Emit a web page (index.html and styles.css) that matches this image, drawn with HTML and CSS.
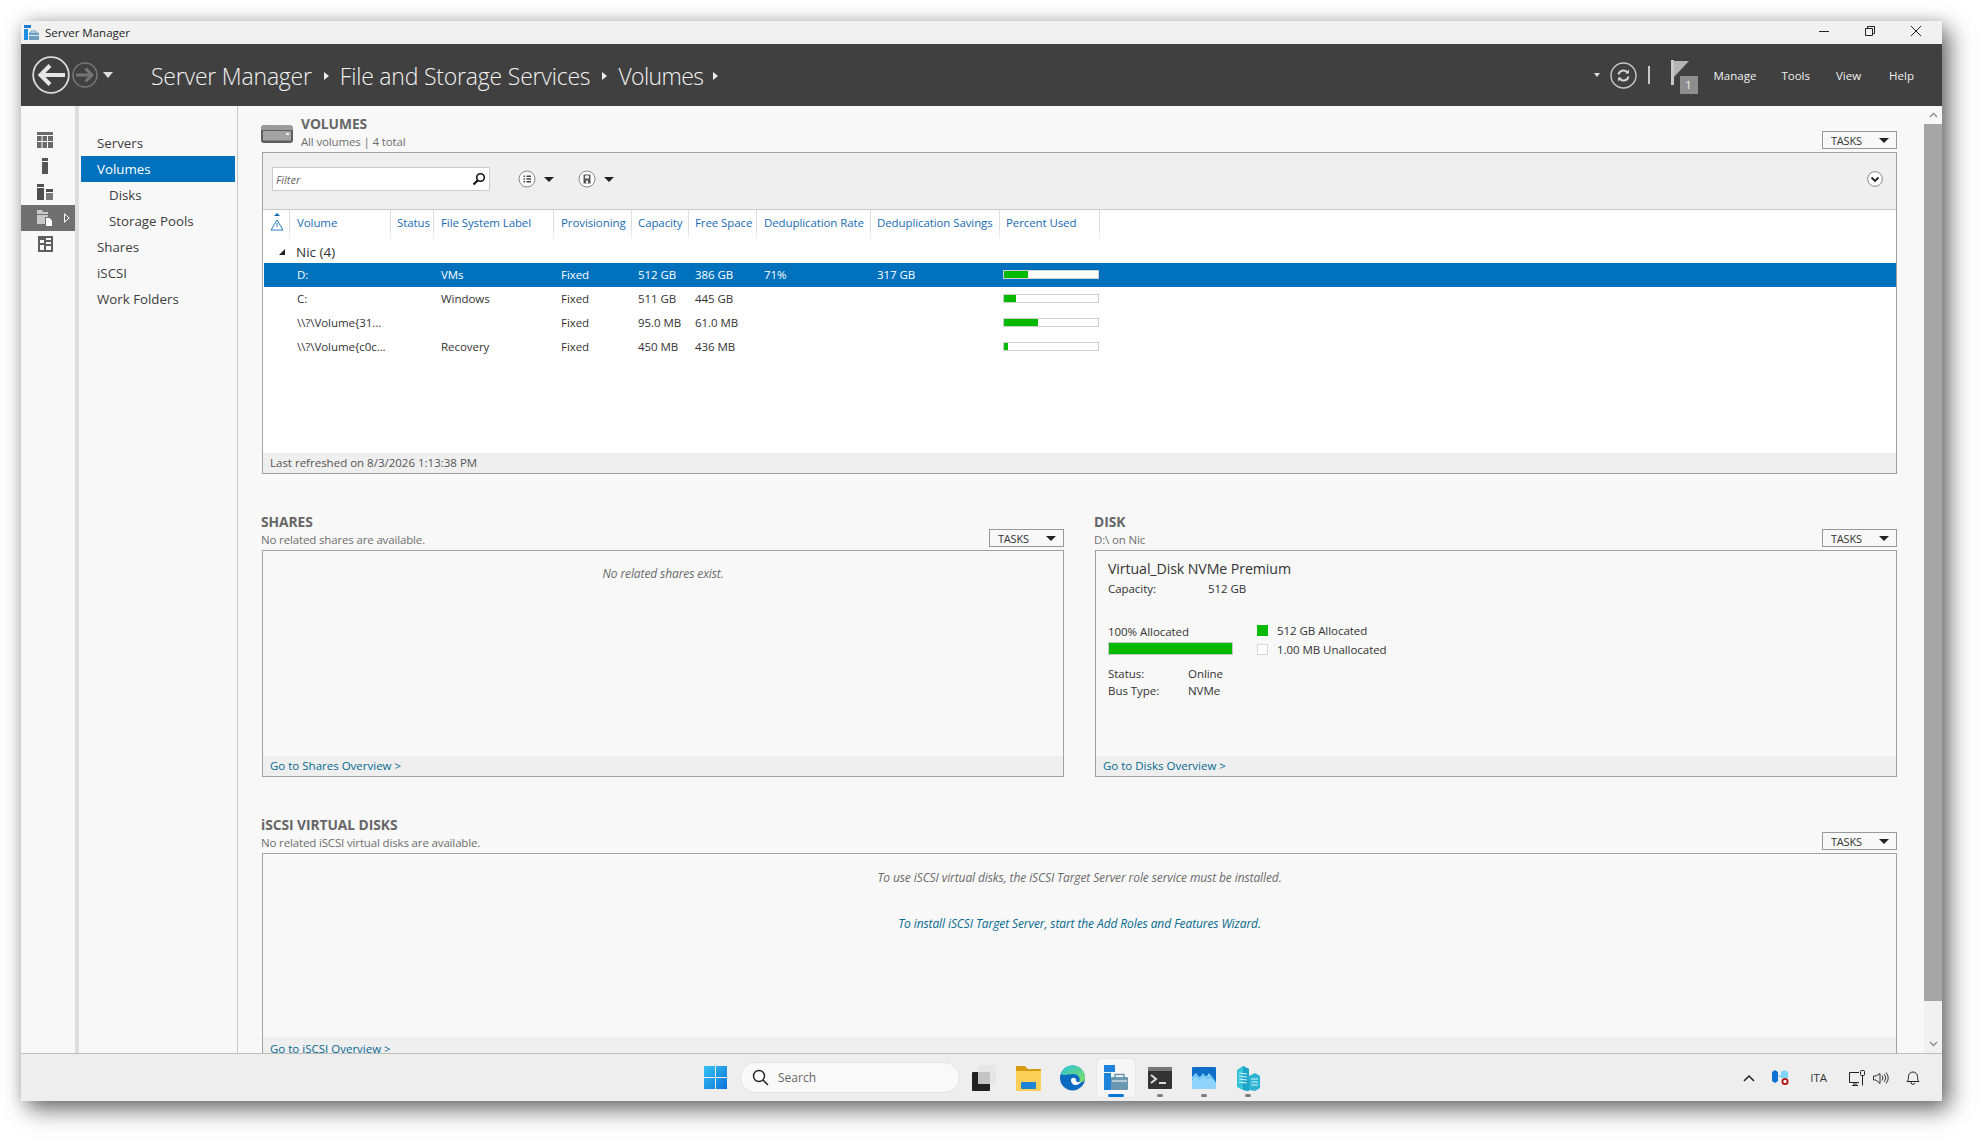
FILE: index.html
```html
<!DOCTYPE html>
<html lang="en">
<head>
<meta charset="utf-8">
<title>Server Manager</title>
<link rel="stylesheet" href="styles.css">
</head>
<body>
<div class="window">
  <header class="titlebar">
    <svg class="app-icon" width="15" height="15" viewBox="0 0 15 15"><rect x="0" y="0" width="7" height="3" fill="#1f78d1"/><rect x="0" y="4" width="4" height="11" fill="#1f8fe0"/><path d="M5 7.500h9a1 1 0 0 1 1 1V15H5z" fill="#6e9dbd"/><path d="M7 7.500V6h5v1.500" fill="none" stroke="#6e9dbd"/><path d="M5 10.500h10" stroke="#fff" stroke-width=".8"/></svg>
    <span class="app-name">Server Manager</span>
    <div class="win-controls">
      <svg width="10" height="10" viewBox="0 0 10 10"><path d="M0 5.500h10" stroke="#222"/></svg>
      <svg width="10" height="10" viewBox="0 0 10 10"><path d="M.5 2.500h7v7h-7z M2.500 2.500V.5h7v7H7.500" fill="none" stroke="#222" stroke-linejoin="round"/></svg>
      <svg width="10" height="10" viewBox="0 0 10 10"><path d="M0 0l10 10M10 0L0 10" stroke="#222"/></svg>
    </div>
  </header>

  <nav class="topbar">
    <svg class="back" width="38" height="38" viewBox="0 0 38 38"><circle cx="19" cy="19" r="17.800" fill="none" stroke="#d9d9d9" stroke-width="1.800"/><path d="M33 19H9M18 9.500 8.500 19l9.500 9.500" fill="none" stroke="#e6e6e6" stroke-width="4"/></svg>
    <svg class="forward" width="26" height="26" viewBox="0 0 26 26"><circle cx="13" cy="13" r="12" fill="none" stroke="#757575" stroke-width="1.600"/><path d="M4 13h16M13.500 6.500 20 13l-6.500 6.500" fill="none" stroke="#757575" stroke-width="3"/></svg>
    <span class="caret-lg"></span>
    <div class="crumbs">
      <span>Server Manager</span><i class="crumb-arrow"></i>
      <span>File and Storage Services</span><i class="crumb-arrow"></i>
      <span class="crumb-last">Volumes</span><i class="crumb-arrow crumb-arrow-last"></i>
    </div>
    <div class="topbar-right">
      <span class="caret-sm"></span>
      <svg class="refresh" width="27" height="27" viewBox="0 0 27 27"><circle cx="13.500" cy="13.500" r="12.500" fill="none" stroke="#c8c8c8" stroke-width="1.400"/><path d="M8.500 12.500a5 5 0 0 1 8.500-2.500M18.500 14.500a5 5 0 0 1-8.500 2.500" fill="none" stroke="#d6d6d6" stroke-width="2"/><path d="M15 11.500h4V7.500zM12 15.500H8v4z" fill="#d6d6d6"/></svg>
      <span class="divider"></span>
      <div class="flag">
        <svg width="18" height="25" viewBox="0 0 18 25"><rect x="0" y="0" width="3" height="25" fill="#c8c8c8"/><path d="M3 1h15L3 17z" fill="#b4b4b4"/></svg>
        <span class="flag-count">1</span>
      </div>
      <span class="menu m-manage">Manage</span>
      <span class="menu m-tools">Tools</span>
      <span class="menu m-view">View</span>
      <span class="menu m-help">Help</span>
    </div>
  </nav>

  <div class="body">
    <aside class="rail">
      <div class="rail-item"><svg width="16" height="16" viewBox="0 0 16 16"><path d="M0 0h16v3H0zM0 4h4.500v5H0zM5.500 4H10v5H5.500zM11 4h5v5h-5zM0 10h4.500v6H0zM5.500 10H10v6H5.500zM11 10h5v6h-5z" fill="#6a6a6a"/></svg></div>
      <div class="rail-item"><svg width="8" height="16" viewBox="0 0 8 16"><path d="M1 0h6v3H1zM1 4h6v12H1z" fill="#555"/></svg></div>
      <div class="rail-item"><svg width="16" height="16" viewBox="0 0 16 16"><path d="M0 0h7v3H0zM0 4h7v12H0z" fill="#4f4f4f"/><path d="M9 5h7v3H9z" fill="#4f4f4f"/><path d="M9 9h7v7H9z" fill="#7a7a7a"/></svg></div>
      <div class="rail-item is-active"><svg width="16" height="16" viewBox="0 0 16 16"><path d="M0 0h5.500v2H11v2H0zM0 5h11v2H8v7H0z" fill="#c9c9c9"/><path d="M9 8h3.500l2.500 2.500V16H9z" fill="#fff"/></svg><svg class="rail-arrow" width="6" height="10" viewBox="0 0 6 10"><path d="M.5.800 5.200 5 .5 9.200z" fill="none" stroke="#fff"/></svg></div>
      <div class="rail-item"><svg width="15" height="16" viewBox="0 0 15 16"><path d="M0 0h15v16H0z" fill="#5f5f5f"/><path d="M2 4h4v3H2zM8 2h5v2H8zM8 6h5v2H8zM2 9h4v5H2zM8 10h5v4H8z" fill="#f8f8f8"/></svg></div>
    </aside>

    <aside class="nav">
      <a class="nav-item">Servers</a>
      <a class="nav-item is-selected">Volumes</a>
      <a class="nav-item sub">Disks</a>
      <a class="nav-item sub">Storage Pools</a>
      <a class="nav-item">Shares</a>
      <a class="nav-item">iSCSI</a>
      <a class="nav-item">Work Folders</a>
    </aside>

    <main class="content">
      <section class="section">
        <div class="sec-head">
          <svg class="vol-icon" width="32" height="19" viewBox="0 0 32 19"><path d="M0 5Q0 1 4 1h24q4 0 4 4v11q0 3-3 3H3q-3 0-3-3z" fill="#5e5e5e"/><path d="M0 5Q0 1 4 1h24q4 0 4 4v1H0z" fill="#9a9a9a"/><rect x="2" y="7" width="28" height="9.500" fill="#a4a4a4"/><rect x="25" y="9" width="3" height="2" fill="#eee"/></svg>
          <div class="sec-titles">
            <h2>VOLUMES</h2>
            <p>All volumes | 4 total</p>
          </div>
          <button class="tasks">TASKS<span class="caret"></span></button>
        </div>
        <div class="panel panel-volumes">
          <div class="toolbar">
            <div class="filter"><span>Filter</span>
              <svg width="14" height="14" viewBox="0 0 14 14"><circle cx="8.500" cy="5.500" r="3.800" fill="none" stroke="#111" stroke-width="1.600"/><path d="M5.800 8.200 1.500 12.500" stroke="#111" stroke-width="2.200"/></svg>
            </div>
            <svg class="tool-a" width="18" height="18" viewBox="0 0 18 18"><circle cx="9" cy="9" r="8" fill="#fff" stroke="#888"/><path d="M5.500 5.500h1.500v1.500H5.500zM5.500 8.300h1.500v1.500H5.500zM5.500 11h1.500v1.500H5.500zM8.500 5.500h4.500v1.500H8.500zM8.500 8.300h4.500v1.500H8.500zM8.500 11h4.500v1.500H8.500z" fill="#444"/></svg>
            <span class="caret tool-caret"></span>
            <svg class="tool-b" width="18" height="18" viewBox="0 0 18 18"><circle cx="9" cy="9" r="8" fill="#fff" stroke="#888"/><path d="M5.500 4.500h7v9h-7z" fill="#555"/><path d="M7 5.500h4v3H7zM8 10.500h2v3H8z" fill="#eee"/></svg>
            <span class="caret tool-caret"></span>
            <svg class="tool-expand" width="16" height="16" viewBox="0 0 16 16"><circle cx="8" cy="8" r="7.400" fill="#fff" stroke="#888"/><path d="M4.500 6.500 8 10l3.500-3.500" fill="none" stroke="#222" stroke-width="1.800"/></svg>
          </div>
          <div class="table">
            <div class="row head">
              <div class="cell sort"><svg width="14" height="18" viewBox="0 0 14 18"><path d="M7 0l3 3H4z" fill="#0b6fb8"/><path d="M7 7 1 17h12z" fill="none" stroke="#2a7fbf"/><path d="M7 10v4" stroke="#2a7fbf"/></svg></div>
              <div class="cell">Volume</div>
              <div class="cell">Status</div>
              <div class="cell">File System Label</div>
              <div class="cell">Provisioning</div>
              <div class="cell">Capacity</div>
              <div class="cell">Free Space</div>
              <div class="cell">Deduplication Rate</div>
              <div class="cell">Deduplication Savings</div>
              <div class="cell">Percent Used</div>
            </div>
            <div class="group"><span class="group-arrow"></span>Nic (4)</div>
            <div class="row data selected">
              <div class="cell"></div><div class="cell">D:</div><div class="cell"></div><div class="cell">VMs</div><div class="cell">Fixed</div><div class="cell">512 GB</div><div class="cell">386 GB</div><div class="cell">71%</div><div class="cell">317 GB</div>
              <div class="cell barcell"><div class="bar"><div class="bar-fill" style="width:25%"></div></div></div>
            </div>
            <div class="row data">
              <div class="cell"></div><div class="cell">C:</div><div class="cell"></div><div class="cell">Windows</div><div class="cell">Fixed</div><div class="cell">511 GB</div><div class="cell">445 GB</div><div class="cell"></div><div class="cell"></div>
              <div class="cell barcell"><div class="bar"><div class="bar-fill" style="width:13%"></div></div></div>
            </div>
            <div class="row data">
              <div class="cell"></div><div class="cell">\\?\Volume{31...</div><div class="cell"></div><div class="cell"></div><div class="cell">Fixed</div><div class="cell">95.0 MB</div><div class="cell">61.0 MB</div><div class="cell"></div><div class="cell"></div>
              <div class="cell barcell"><div class="bar"><div class="bar-fill" style="width:36%"></div></div></div>
            </div>
            <div class="row data">
              <div class="cell"></div><div class="cell">\\?\Volume{c0c...</div><div class="cell"></div><div class="cell">Recovery</div><div class="cell">Fixed</div><div class="cell">450 MB</div><div class="cell">436 MB</div><div class="cell"></div><div class="cell"></div>
              <div class="cell barcell"><div class="bar"><div class="bar-fill" style="width:4%"></div></div></div>
            </div>
          </div>
          <div class="foot">Last refreshed on 8/3/2026 1:13:38 PM</div>
        </div>
      </section>

      <div class="two-col">
        <section class="section">
          <div class="sec-head">
            <div class="sec-titles">
              <h2>SHARES</h2>
              <p>No related shares are available.</p>
            </div>
            <button class="tasks">TASKS<span class="caret"></span></button>
          </div>
          <div class="panel panel-mid">
            <div class="panel-body"><p class="msg">No related shares exist.</p></div>
            <div class="foot"><a class="link">Go to Shares Overview &gt;</a></div>
          </div>
        </section>
        <section class="section">
          <div class="sec-head">
            <div class="sec-titles">
              <h2>DISK</h2>
              <p>D:\ on Nic</p>
            </div>
            <button class="tasks">TASKS<span class="caret"></span></button>
          </div>
          <div class="panel panel-mid">
            <div class="panel-body disk">
              <div class="disk-title">Virtual_Disk NVMe Premium</div>
              <div class="kv capacity"><span class="k">Capacity:</span><span>512 GB</span></div>
              <div class="alloc">
                <div class="alloc-left">
                  <div class="alloc-label">100% Allocated</div>
                  <div class="alloc-bar"></div>
                </div>
                <div class="legend">
                  <div class="legend-row"><span class="sw sw-green"></span>512 GB Allocated</div>
                  <div class="legend-row"><span class="sw"></span>1.00 MB Unallocated</div>
                </div>
              </div>
              <div class="kv2"><span class="k">Status:</span><span>Online</span></div>
              <div class="kv2"><span class="k">Bus Type:</span><span>NVMe</span></div>
            </div>
            <div class="foot"><a class="link">Go to Disks Overview &gt;</a></div>
          </div>
        </section>
      </div>

      <section class="section">
        <div class="sec-head">
          <div class="sec-titles">
            <h2>iSCSI VIRTUAL DISKS</h2>
            <p>No related iSCSI virtual disks are available.</p>
          </div>
          <button class="tasks">TASKS<span class="caret"></span></button>
        </div>
        <div class="panel panel-iscsi">
          <div class="panel-body">
            <p class="msg">To use iSCSI virtual disks, the iSCSI Target Server role service must be installed.</p>
            <p class="msg msg-link">To install iSCSI Target Server, start the Add Roles and Features Wizard.</p>
          </div>
          <div class="foot"><a class="link">Go to iSCSI Overview &gt;</a></div>
        </div>
      </section>
    </main>

    <div class="scrollbar">
      <div class="sb-btn"><svg width="9" height="6" viewBox="0 0 9 6"><path d="M1 5l3.500-3.500L8 5" fill="none" stroke="#8a8a8a" stroke-width="1.300"/></svg></div>
      <div class="sb-thumb"></div>
      <div class="sb-rest"><svg width="9" height="6" viewBox="0 0 9 6"><path d="M1 1l3.500 3.500L8 1" fill="none" stroke="#8a8a8a" stroke-width="1.300"/></svg></div>
    </div>
  </div>

  <footer class="taskbar">
    <svg class="tb-start" width="23" height="23" viewBox="0 0 23 23"><defs><linearGradient id="ws" x1="0" y1="0" x2="1" y2="1"><stop offset="0" stop-color="#36c5f5"/><stop offset="1" stop-color="#0a70d8"/></linearGradient></defs><path d="M0 0h11v11H0zM12 0h11v11H12zM0 12h11v11H0zM12 12h11v11H12z" fill="url(#ws)"/></svg>
    <div class="tb-search">
      <svg width="17" height="17" viewBox="0 0 17 17"><circle cx="7" cy="7" r="5.500" fill="none" stroke="#222" stroke-width="1.400"/><path d="M11 11l5 5" stroke="#222" stroke-width="1.500"/></svg>
      <span>Search</span>
    </div>
    <div class="tb-app a-view"><svg width="24" height="26" viewBox="0 0 24 26"><rect x="0" y="7" width="18" height="19" rx="1" fill="#222"/><rect x="6" y="0" width="18" height="19" rx="1" fill="#e6e6e6"/><rect x="6" y="7" width="12" height="12" fill="#c4c4c4"/></svg></div>
    <div class="tb-app a-folder"><svg width="25" height="26" viewBox="0 0 25 26"><path d="M0 2a1 1 0 0 1 1-1h8l3 3h12a1 1 0 0 1 1 1v3H0z" fill="#d59a11"/><path d="M0 6h25v19a1 1 0 0 1-1 1H1a1 1 0 0 1-1-1z" fill="#fbcf58"/><rect x="5" y="17" width="15" height="7" rx="1" fill="#1b83d4"/></svg></div>
    <div class="tb-app a-edge"><svg width="25" height="26" viewBox="0 0 25 26"><defs><linearGradient id="eg" x1="0" y1="0" x2="1" y2="1"><stop offset="0" stop-color="#2bc4d9"/><stop offset="1" stop-color="#7ee05f"/></linearGradient></defs><circle cx="12.500" cy="13" r="12.500" fill="#0c6bc0"/><path d="M1 9C3 3 8 .5 12.500.5 20 .5 25 6 25 13c0 3-3 5-6 4 2-3 0-8-6-8-5 0-9 2-12 0z" fill="url(#eg)"/><path d="M9 14c0-4 5-5 8-2 1 2-1 4 2 5 1 .5-1 5-6 6-3 0-5-5-4-9z" fill="#0c6bc0"/><path d="M11 15c0-3 5-3 5 0 0 3 3 2 5 2-2 3-5 3-7 3-2-1-3-3-3-5z" fill="#fff"/></svg></div>
    <div class="tb-app a-sm is-open"><svg width="24" height="25" viewBox="0 0 24 25"><rect x="0" y="0" width="11" height="7" fill="#1f83dc"/><rect x="0" y="8" width="7" height="17" fill="#1f83dc"/><rect x="7" y="12" width="17" height="13" rx="1" fill="#6c97b1"/><path d="M11 12V9.500h9V12" fill="none" stroke="#6c97b1" stroke-width="1.500"/><path d="M8 16h15" stroke="#fff"/></svg></div>
    <div class="tb-app a-term has-dot"><svg width="24" height="22" viewBox="0 0 24 22"><rect width="24" height="22" rx="1" fill="#333"/><rect width="24" height="4" fill="#777"/><path d="M3 8l5 4-5 4" fill="none" stroke="#ddd" stroke-width="2"/><path d="M11 16h7" stroke="#ddd" stroke-width="2"/></svg></div>
    <div class="tb-app a-rdp has-dot"><svg width="24" height="22" viewBox="0 0 24 22"><rect width="24" height="22" rx="1" fill="#0f6fc6"/><path d="M0 22V10l4-4 3 4 2-1 2-3 1 3h3l2-3 3 5 4 4v7z" fill="#8ed3fb"/><path d="M0 13l4-5 3 4 2-1 3-4 2 4h3l2-3 5 8" fill="none" stroke="#52b6f2"/></svg></div>
    <div class="tb-app a-bld has-dot"><svg width="23" height="26" viewBox="0 0 23 26"><path d="M0 5l6-4 6 3v22l-6-1-6-3z" fill="#35c3d8"/><path d="M6 1v24l6 1V4z" fill="#1fa4c9"/><path d="M12 11l6-3 5 3v12l-5 3-6-1z" fill="#2cb2d2"/><path d="M2 8l8 1M2 11l8 1M2 14l8 1M2 17l8 1M14 14l7 0M14 17l7 0M14 20l7 0" stroke="#d6f4f9"/></svg></div>
    <div class="tray">
      <svg class="t-chev" width="12" height="8" viewBox="0 0 12 8"><path d="M1 7l5-5 5 5" fill="none" stroke="#222" stroke-width="1.500"/></svg>
      <svg class="t-net" width="17" height="15" viewBox="0 0 17 15"><path d="M0 2l3-2 3 2v9l-3 2-3-2z" fill="#1272d3"/><path d="M9 2l3-2 4 2v6H9z" fill="#7fd3f8"/><path d="M6 6h4" stroke="#6fb9ee"/><circle cx="13" cy="11.500" r="2.600" fill="#fff" stroke="#b21414" stroke-width="1.800"/></svg>
      <span class="t-lang">ITA</span>
      <svg class="t-mon" width="16" height="16" viewBox="0 0 16 16"><path d="M10 2.500H.5v10H10M3 15.500h6M5 12.500v3M7 12.500v3" fill="none" stroke="#222"/><rect x="11.500" y=".5" width="4" height="5" rx="1" fill="none" stroke="#222"/><path d="M13.500 5.500v10" stroke="#222"/></svg>
      <svg class="t-vol" width="16" height="14" viewBox="0 0 16 14"><path d="M.5 5v4H3l4 3.500v-10L3 5z" fill="none" stroke="#333"/><path d="M9 4.500a4 4 0 0 1 0 5M11 3a6 6 0 0 1 0 8M13 1.500a8 8 0 0 1 0 11" fill="none" stroke="#333"/></svg>
      <svg class="t-bell" width="14" height="15" viewBox="0 0 14 15"><path d="M1 11.500c1-1 1.500-2 1.500-5a4.500 4.500 0 0 1 9 0c0 3 .5 4 1.500 5zM5 11.500a2 2 0 0 0 4 1.500" fill="none" stroke="#222"/></svg>
    </div>
  </footer>
</div>
</body>
</html>
```

FILE: styles.css
```css
* { box-sizing: border-box; }
html, body { margin: 0; height: 100%; background: #fff; overflow: hidden; }
body {
  padding: 21px 0 0 21px;
  font-family: "Open Sans", "Noto Sans", sans-serif;
  font-size: 11.5px;
  color: #333;
}
h2, p { margin: 0; }

.window {
  width: 1921px;
  height: 1080px;
  display: flex;
  flex-direction: column;
  background: #f8f8f8;
  box-shadow: 7px 8px 22px rgba(0,0,0,.6), 0 0 12px rgba(0,0,0,.1);
}

/* title bar */
.titlebar {
  height: 23px;
  flex: none;
  display: flex;
  align-items: center;
  padding-left: 3px;
  background: #f1f1f1;
}
.app-name { margin-left: 6px; font-size: 11.5px; color: #222; }
.win-controls { margin-left: auto; display: flex; gap: 36px; padding: 0 21px 3px 0; }

/* top bar */
.topbar {
  height: 62px;
  flex: none;
  display: flex;
  align-items: center;
  padding-left: 11px;
  background: #404040;
  color: #eee;
}
.forward { margin-left: 2px; }
.caret-lg {
  margin-left: 5px;
  border-left: 5.5px solid transparent;
  border-right: 5.5px solid transparent;
  border-top: 6px solid #ddd;
}
.crumbs {
  margin-left: 38px;
  padding-top: 1px;
  display: flex;
  align-items: center;
  font-size: 23px;
  font-weight: 300;
  letter-spacing: -.2px;
  color: #f2f2f2;
}
.crumb-arrow {
  margin: 0 11px 0 12px;
  border-top: 4px solid transparent;
  border-bottom: 4px solid transparent;
  border-left: 5px solid #eee;
}
.crumb-last { letter-spacing: -.6px; }
.crumb-arrow-last { margin-left: 10px; }
.topbar-right { margin-left: auto; display: flex; align-items: center; }
.caret-sm {
  border-left: 3.5px solid transparent;
  border-right: 3.5px solid transparent;
  border-top: 4px solid #ddd;
}
.refresh { margin-left: 10px; }
.divider { width: 2px; height: 18px; margin-left: 11px; background: #c8c8c8; }
.flag { position: relative; width: 28px; height: 36px; margin: 6px 0 0 21px; }
.flag-count {
  position: absolute;
  left: 9px;
  top: 16px;
  width: 18px;
  height: 18px;
  background: #8e8e8e;
  color: #eee;
  font-size: 11px;
  line-height: 18px;
  text-align: center;
}
.menu { font-size: 11.5px; color: #f0f0f0; }
.m-manage { margin-left: 15px; }
.m-tools { margin-left: 25px; }
.m-view { margin-left: 26px; }
.m-help { margin-left: 28px; margin-right: 28px; }

/* body */
.body { flex: 1; min-height: 0; display: flex; overflow: hidden; }

.rail {
  width: 58px;
  flex: none;
  padding-top: 21px;
  border-right: 4px solid #dedede;
}
.rail-item { position: relative; height: 26px; display: flex; align-items: center; justify-content: center; padding-right: 6px; }
.rail-item.is-active { background: #707070; }
.rail-arrow { position: absolute; left: 43px; top: 8px; }

.nav {
  width: 159px;
  flex: none;
  padding: 24px 2px 0;
  border-right: 1px solid #c8c8c8;
}
.nav-item { display: block; height: 26px; line-height: 26px; padding-left: 16px; font-size: 13.3px; color: #3c3c3c; }
.nav-item.sub { padding-left: 28px; }
.nav-item.is-selected { background: #0071bc; color: #fff; }

/* content */
.content { flex: 1; min-width: 0; padding: 8px 27px 0 24px; overflow: hidden; }
.section { margin-bottom: 38px; }
.sec-head { height: 37px; margin-bottom: 1px; display: flex; align-items: flex-start; }
.vol-icon { margin: 10px 9px 0 -1px; flex: none; }
.sec-titles { flex: 1; min-width: 0; margin-left: -1px; padding-top: 1px; }
.sec-titles h2 { font-size: 13.8px; line-height: 18px; font-weight: 700; color: #666; letter-spacing: -.05px; }
.sec-titles p { font-size: 11.5px; line-height: 17px; color: #6e6e6e; letter-spacing: -.15px; }
.tasks {
  width: 75px;
  height: 18px;
  margin-top: 17px;
  padding: 0 0 0 8px;
  display: flex;
  align-items: center;
  justify-content: space-between;
  flex: none;
  border: 1px solid #999;
  background: #f8f8f8;
  font: inherit;
  font-size: 11px;
  letter-spacing: -.2px;
  color: #333;
}
.caret {
  border-left: 5px solid transparent;
  border-right: 5px solid transparent;
  border-top: 5px solid #222;
}
.tasks .caret { margin-right: 7px; }

.panel { display: flex; flex-direction: column; border: 1px solid #a2a2a2; }
.panel-volumes { height: 322px; background: #fff; }
.panel-mid { height: 227px; }
.panel-iscsi { height: 205px; }
.panel-body { flex: 1; min-height: 0; }
.foot {
  height: 20px;
  flex: none;
  padding-left: 7px;
  line-height: 19px;
  background: #efefef;
  font-size: 11.5px;
  color: #555;
}
.panel-iscsi .foot { line-height: 23px; }
.link { color: #06698f; }
.msg { padding-top: 14px; text-align: center; font-size: 12px; font-style: italic; letter-spacing: -.1px; color: #6a6a6a; }
.panel-iscsi .msg { padding-top: 15px; }
.panel-iscsi .msg-link { padding-top: 29px; color: #06698f; }

/* toolbar */
.toolbar {
  height: 57px;
  flex: none;
  display: flex;
  align-items: flex-start;
  padding: 14px 0 0 9px;
  background: #efefef;
  border-bottom: 1px solid #c8c8c8;
}
.filter {
  width: 218px;
  height: 24px;
  display: flex;
  align-items: center;
  justify-content: space-between;
  padding: 0 3px;
  background: #fff;
  border: 1px solid #ccc;
  font-size: 11px;
  font-style: italic;
  color: #666;
}
.tool-a { margin: 3px 0 0 28px; }
.tool-b { margin: 3px 0 0 24px; }
.tool-caret { margin: 10px 0 0 8px; }
.tool-expand { margin: 4px 13px 0 auto; }

/* table */
.table { flex: 1; min-height: 0; }
.row {
  display: grid;
  grid-template-columns: 27px 101px 43px 120px 78px 57px 68px 114px 129px 100px 1fr;
}
.cell { padding-left: 7px; white-space: nowrap; overflow: hidden; }
.head { height: 31px; }
.head .cell {
  line-height: 25px;
  font-size: 11.5px;
  letter-spacing: -.1px;
  color: #1a6db3;
  border-right: 1px solid;
  border-image: linear-gradient(#ddd, #ddd 60%, #fff) 1;
}
.head .sort { padding: 3px 0 0 7px; }
.head .cell:nth-child(3),
.head .cell:nth-child(6),
.head .cell:nth-child(7),
.head .cell:nth-child(9),
.head .cell:nth-child(10),
.data .cell:nth-child(6),
.data .cell:nth-child(7),
.data .cell:nth-child(9) { padding-left: 6px; }
.group { height: 22px; display: flex; align-items: center; font-size: 13.5px; color: #333; padding-left: 16px; }
.group-arrow {
  width: 0; height: 0;
  margin-right: 11px;
  border-left: 6px solid transparent;
  border-bottom: 6px solid #222;
}
.data { height: 24px; line-height: 24px; font-size: 11.5px; letter-spacing: -.05px; color: #333; }
.data.selected { margin-left: 1px; background: #0071bc; color: #fff; grid-template-columns: 26px 101px 43px 120px 78px 57px 68px 114px 129px 100px 1fr; }
.data .barcell { padding-left: 3px; }
.bar { width: 96px; height: 9px; margin-top: 7px; border: 1px solid #d0d0d0; background: #fff; }
.bar-fill { height: 100%; background: #00b900; }

/* two columns */
.two-col { display: grid; grid-template-columns: 1fr 1fr; gap: 31px; }

/* disk */
.disk { padding: 9px 0 0 12px; font-size: 11.5px; letter-spacing: -.05px; color: #333; }
.disk-title { font-size: 14.2px; line-height: 18px; letter-spacing: -.1px; color: #333; }
.kv { display: flex; line-height: 22px; }
.kv .k { width: 100px; }
.alloc { display: flex; margin-top: 22px; height: 40px; }
.alloc-left { width: 149px; padding-top: 2px; }
.alloc-label { line-height: 15px; }
.alloc-bar { width: 125px; height: 13px; margin-top: 3px; background: #00b900; border: 1px solid #c8c8c8; }
.legend { margin-top: -1px; }
.legend-row { display: flex; align-items: center; height: 19px; }
.sw { width: 11px; height: 11px; margin-right: 9px; border: 1px solid #d8d8d8; background: #fff; }
.sw-green { background: #00b900; border-color: #00b900; }
.kv2 { display: flex; line-height: 17px; }
.kv2 .k { width: 80px; }
.alloc + .kv2 { margin-top: 3px; }

/* scrollbar */
.scrollbar { width: 18px; flex: none; display: flex; flex-direction: column; background: #f8f8f8; }
.sb-btn { height: 18px; display: flex; align-items: center; justify-content: center; }
.sb-thumb { height: 877px; background: #a6a6a6; }
.sb-rest { flex: 1; display: flex; align-items: flex-end; justify-content: center; padding-bottom: 6px; background: #f1f1f1; }

/* taskbar */
.taskbar {
  height: 48px;
  flex: none;
  display: flex;
  align-items: center;
  padding-left: 683px;
  background: #eeeeee;
  border-top: 1px solid #bdbdbd;
}
.tb-start { margin-right: 13px; }
.tb-search {
  width: 220px;
  height: 31px;
  display: flex;
  align-items: center;
  gap: 9px;
  padding-left: 11px;
  background: #f9f9f9;
  border: 1px solid #e2e2e2;
  border-radius: 16px;
  font-size: 12px;
  color: #666;
}
.tb-app { position: relative; width: 44px; height: 38px; display: flex; align-items: center; justify-content: center; }
.a-view { margin-left: 2px; }
.a-sm { background: #f7f7f7; border-radius: 4px; box-shadow: 0 0 1px rgba(0,0,0,.25); width: 38px; margin: 0 3px; }
.is-open::after, .has-dot::after {
  content: "";
  position: absolute;
  left: 50%;
  bottom: 0;
  transform: translateX(-50%);
  height: 3px;
  border-radius: 2px;
}
.is-open::after { width: 16px; background: #0a76d6; }
.has-dot::after { width: 6px; background: #7c7c7c; }
.tray { margin-left: auto; display: flex; align-items: center; padding-right: 22px; }
.t-net { margin-left: 17px; }
.t-lang { margin-left: 21px; font-size: 11.5px; color: #333; }
.t-mon { margin-left: 22px; }
.t-vol { margin-left: 8px; }
.t-bell { margin-left: 17px; }
```
